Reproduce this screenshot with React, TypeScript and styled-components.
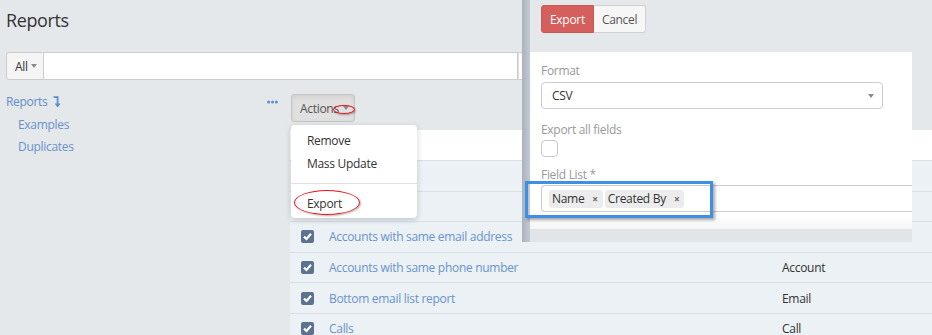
import styled, { createGlobalStyle } from "styled-components";

const GlobalStyle = createGlobalStyle`
  html, body {
    margin: 0;
    padding: 0;
    background: #e4e8eb;
  }
  body {
    font-family: "Open Sans", "Liberation Sans", sans-serif;
    font-size: 12px;
    letter-spacing: -0.3px;
    color: #333;
  }
  * {
    box-sizing: border-box;
  }
`;

const rows = [
  { name: "Accounts", entity: "Account" },
  { name: "Activities", entity: "Meeting" },
  { name: "Accounts with same email address", entity: "Account" },
  { name: "Accounts with same phone number", entity: "Account" },
  { name: "Bottom email list report", entity: "Email" },
  { name: "Calls", entity: "Call" },
];

export default function App() {
  return (
    <Page>
      <GlobalStyle />
      <Title>Reports</Title>
      <SearchRow>
        <AllButton>
          All <Caret />
        </AllButton>
        <SearchInput />
        <SearchAddon />
      </SearchRow>
      <Body>
        <Sidebar>
          <SideHead>
            <SideLink>
              Reports <LevelDown />
            </SideLink>
            <Dots />
          </SideHead>
          <SubLink>Examples</SubLink>
          <SubLink>Duplicates</SubLink>
        </Sidebar>
        <Main>
          <ActionsWrap>
            <ActionsButton>
              Actions <Caret />
            </ActionsButton>
            <Ellipse $left={43} $top={11} $w={22} $h={9} />
            <Menu>
              <MenuItem>Remove</MenuItem>
              <MenuItem>Mass Update</MenuItem>
              <MenuDivider />
              <MenuItem>Export</MenuItem>
            </Menu>
            <Ellipse $left={4} $top={96} $w={66} $h={25} />
          </ActionsWrap>
          <Table>
            <HeadRow>
              <CheckCell />
              <NameCell>Name</NameCell>
              <EntityCell>Entity Type</EntityCell>
            </HeadRow>
            {rows.map((r) => (
              <Row key={r.name}>
                <CheckCell>
                  <CheckBox />
                </CheckCell>
                <NameCell>
                  <RowLink>{r.name}</RowLink>
                </NameCell>
                <EntityCell>{r.entity}</EntityCell>
              </Row>
            ))}
          </Table>
        </Main>
      </Body>

      <Modal>
        <ModalEdge />
        <Panel>
          <ModalHeader>
            <ExportButton>Export</ExportButton>
            <CancelButton>Cancel</CancelButton>
          </ModalHeader>
          <ModalBody>
            <FieldLabel>Format</FieldLabel>
            <Select>
              CSV
              <Caret />
            </Select>
            <FieldLabel $gap={12}>Export all fields</FieldLabel>
            <FormCheck />
            <FieldLabel $gap={9}>Field List *</FieldLabel>
            <TagInput>
              <Tag>
                Name <TagClose>×</TagClose>
              </Tag>
              <Tag>
                Created By <TagClose>×</TagClose>
              </Tag>
            </TagInput>
          </ModalBody>
          <ModalFooter />
        </Panel>
        <Highlight />
      </Modal>
    </Page>
  );
}

function Caret() {
  return <CaretShape />;
}

function LevelDown() {
  return (
    <svg width="8" height="12" viewBox="0 0 8 12" style={{ marginLeft: 3, verticalAlign: -2 }}>
      <path d="M0.5 1.2 H4.6 V8" stroke="#5f8dc9" strokeWidth="1.8" fill="none" />
      <polygon points="1.6,7.6 7.6,7.6 4.6,11.6" fill="#5f8dc9" />
    </svg>
  );
}

function Dots() {
  return (
    <svg width="11" height="4" viewBox="0 0 11 4">
      <circle cx="1.6" cy="2" r="1.5" fill="#5f8dc9" />
      <circle cx="5.5" cy="2" r="1.5" fill="#5f8dc9" />
      <circle cx="9.4" cy="2" r="1.5" fill="#5f8dc9" />
    </svg>
  );
}

function CheckBox() {
  return (
    <CheckShape>
      <svg width="13" height="13" viewBox="0 0 13 13">
        <path d="M3 6.6 L5.5 9 L10 3.8" stroke="#fff" strokeWidth="2.2" fill="none" />
      </svg>
    </CheckShape>
  );
}

const Page = styled.div`
  position: relative;
  width: 932px;
  height: 335px;
  overflow: hidden;
`;

const Title = styled.h1`
  margin: 8px 0 0 6px;
  font-size: 18px;
  line-height: 24px;
  font-weight: 400;
  letter-spacing: -0.4px;
  color: #333;
`;

const SearchRow = styled.div`
  display: flex;
  margin: 20px 0 0 6px;
  height: 28px;
  width: 560px;
`;

const AllButton = styled.div`
  display: flex;
  align-items: center;
  gap: 3px;
  width: 38px;
  padding-left: 8px;
  background: #f5f5f5;
  border: 1px solid #ccc;
  border-radius: 3px 0 0 3px;
  color: #333;
`;

const SearchInput = styled.div`
  flex: 1;
  background: #fff;
  border: 1px solid #ccc;
  border-left: none;
`;

const SearchAddon = styled.div`
  width: 48px;
  background: #fff;
  border: 1px solid #ccc;
  border-left: 1px solid #ddd;
`;

const CaretShape = styled.span`
  display: inline-block;
  width: 0;
  height: 0;
  border-left: 3.5px solid transparent;
  border-right: 3.5px solid transparent;
  border-top: 4px solid #8a8a8a;
`;

const Body = styled.div`
  display: flex;
  margin-top: 10px;
`;

const Sidebar = styled.div`
  width: 290px;
  flex: none;
  padding: 1px 0 0 6px;
  line-height: 22.5px;
`;

const SideHead = styled.div`
  display: flex;
  justify-content: space-between;
  align-items: center;
  padding-right: 12px;
`;

const SideLink = styled.span`
  color: #5f8dc9;
`;

const SubLink = styled.div`
  padding-left: 12px;
  color: #6a93cc;
`;

const Main = styled.div`
  flex: 1;
  padding-top: 4px;
`;

const ActionsWrap = styled.div`
  position: relative;
  height: 36px;
`;

const ActionsButton = styled.div`
  display: inline-flex;
  align-items: center;
  gap: 4px;
  width: 64px;
  height: 28px;
  padding: 0 8px;
  margin-left: 1px;
  background: #e0e0e0;
  border: 1px solid #c4c4c4;
  border-radius: 3px;
  color: #555;
  box-shadow: inset 0 2px 4px rgba(0, 0, 0, 0.08);
`;

const Menu = styled.div`
  position: absolute;
  z-index: 2;
  left: 1px;
  top: 31px;
  width: 126px;
  padding: 4px 0 3px;
  background: #fff;
  border-radius: 4px;
  box-shadow: 0 2px 6px rgba(0, 0, 0, 0.18);
`;

const MenuItem = styled.div`
  padding-left: 16px;
  line-height: 23px;
  color: #333;
`;

const MenuDivider = styled.div`
  height: 1px;
  margin: 8px 0;
  background: #e2e2e2;
`;

const Ellipse = styled.div<{ $left: number; $top: number; $w: number; $h: number }>`
  position: absolute;
  z-index: 3;
  left: ${(p) => p.$left}px;
  top: ${(p) => p.$top}px;
  width: ${(p) => p.$w}px;
  height: ${(p) => p.$h}px;
  border: 1.5px solid #e8141b;
  border-radius: 50%;
  box-shadow: 1px 1px 2px rgba(0, 0, 0, 0.3);
`;

const Table = styled.div`
  width: 700px;
`;

const HeadRow = styled.div`
  display: flex;
  align-items: center;
  height: 30px;
  background: #fff;
  color: #333;
`;

const Row = styled.div`
  display: flex;
  align-items: center;
  height: 30.6px;
  background: #ebf1f5;
  border-top: 1px solid #d9e0e5;
`;

const CheckCell = styled.div`
  width: 39px;
  flex: none;
  padding-left: 11px;
  display: flex;
`;

const CheckShape = styled.span`
  display: inline-flex;
  width: 13px;
  height: 13px;
  border-radius: 2px;
  background: #5c7390;
`;

const NameCell = styled.div`
  width: 453px;
  flex: none;
`;

const RowLink = styled.span`
  color: #6a93cc;
`;

const EntityCell = styled.div`
  flex: 1;
  color: #333;
`;

const Modal = styled.div`
  position: absolute;
  z-index: 5;
  left: 522px;
  top: 0;
  width: 390px;
  height: 242px;
  display: flex;
`;

const ModalEdge = styled.div`
  width: 8px;
  flex: none;
  background: linear-gradient(to right, #a9b3be, #c3cad2);
`;

const Panel = styled.div`
  flex: 1;
  display: flex;
  flex-direction: column;
  overflow: hidden;
  background: #e4e8eb;
`;

const ModalHeader = styled.div`
  height: 52px;
  flex: none;
  display: flex;
  align-items: flex-start;
  padding: 5px 11px 0;
`;

const BaseButton = styled.div`
  height: 28px;
  display: flex;
  align-items: center;
  padding: 0 8px;
  border: 1px solid;
`;

const ExportButton = styled(BaseButton)`
  background: #d45f5c;
  border-color: #cd5653;
  color: #fff;
  border-radius: 3px 0 0 3px;
`;

const CancelButton = styled(BaseButton)`
  background: #f6f6f6;
  border-color: #d0d0d0;
  border-left: none;
  color: #555;
  border-radius: 0 3px 3px 0;
`;

const ModalBody = styled.div`
  flex: 1;
  background: linear-gradient(to bottom, #fff 92%, #f4f5f6);
  padding: 10px 0 0 11px;
  display: flex;
  flex-direction: column;
  align-items: flex-start;
`;

const FieldLabel = styled.div<{ $gap?: number }>`
  margin-top: ${(p) => p.$gap ?? 0}px;
  line-height: 18px;
  color: #999;
`;

const Select = styled.div`
  margin-top: 2px;
  width: 342px;
  height: 27px;
  display: flex;
  align-items: center;
  justify-content: space-between;
  padding: 0 8px 0 10px;
  border: 1px solid #ccc;
  border-radius: 4px;
  color: #333;
`;

const FormCheck = styled.div`
  margin-top: 1px;
  width: 17px;
  height: 17px;
  border: 1px solid #c8c8c8;
  border-radius: 4px;
  background: #fff;
`;

const TagInput = styled.div`
  margin-top: 1px;
  width: 420px;
  height: 27px;
  display: flex;
  align-items: center;
  gap: 2px;
  padding-left: 7px;
  border: 1px solid #ccc;
  border-right: none;
  border-radius: 4px 0 0 4px;
`;

const Tag = styled.div`
  display: flex;
  align-items: center;
  height: 18px;
  padding: 0 5px 0 3px;
  background: #ececec;
  border-radius: 3px;
  color: #333;
`;

const TagClose = styled.span`
  margin-left: 8px;
  font-size: 10px;
  font-weight: 700;
  color: #666;
`;

const ModalFooter = styled.div`
  height: 13px;
  flex: none;
  background: #e2e5e8;
`;

const Highlight = styled.div`
  position: absolute;
  left: 3px;
  top: 181px;
  width: 188px;
  height: 37px;
  border: 3px solid #3d8fe8;
  box-shadow: 2px 2px 3px rgba(0, 0, 0, 0.35);
`;
